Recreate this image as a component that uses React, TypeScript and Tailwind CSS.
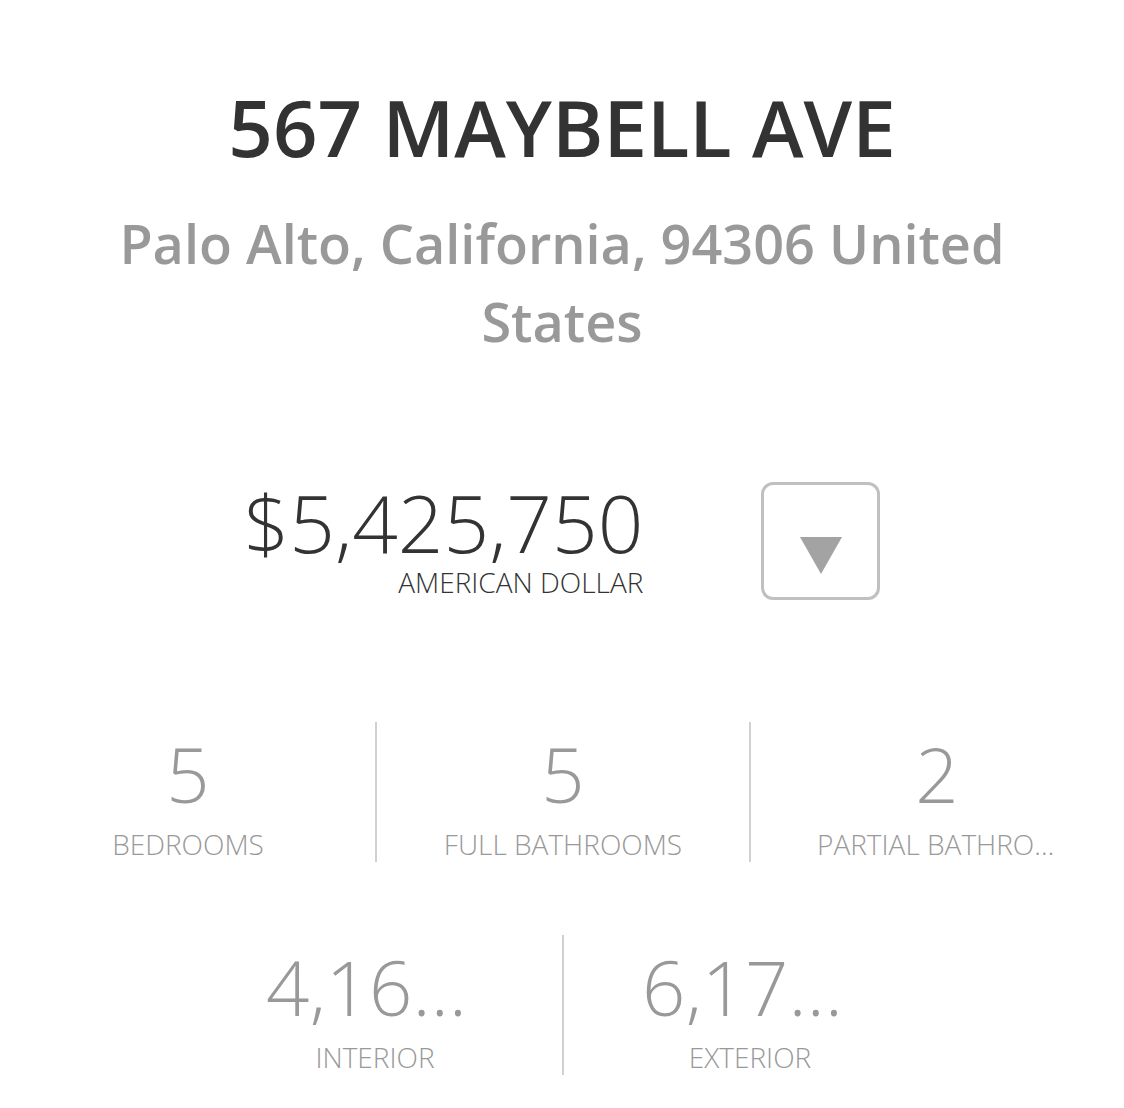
const font = { fontFamily: '"Open Sans", "Liberation Sans", sans-serif' };

type Stat = { value: string; label: string };

const topStats: Stat[] = [
  { value: "5", label: "BEDROOMS" },
  { value: "5", label: "FULL BATHROOMS" },
  { value: "2", label: "PARTIAL BATHROOMS" },
];

const areaStats: Stat[] = [
  { value: "4,164 sq ft", label: "INTERIOR" },
  { value: "6,173 sq ft", label: "EXTERIOR" },
];

function StatCell({ stat, first, wide }: { stat: Stat; first: boolean; wide?: boolean }) {
  return (
    <div
      className={`w-[374px] h-[140px] pt-[14px] text-center text-[#999999] ${
        wide ? "px-[78px]" : "px-[66px]"
      } ${first ? "" : "border-l-2 border-[#d0d0d0]"}`}
    >
      <div className="text-[76px] leading-none font-light truncate">{stat.value}</div>
      <div className="mt-[15px] text-[28px] leading-[35px] font-light truncate">{stat.label}</div>
    </div>
  );
}

export default function App() {
  return (
    <div className="min-h-screen bg-white" style={font}>
      <div className="w-[1124px] mx-auto pt-[88px] pb-[30px] flex flex-col items-center">
        <h1 className="text-[78px] leading-none font-semibold text-[#333333] text-center">
          567 MAYBELL AVE
        </h1>
        <p className="mt-[38px] px-[100px] text-[54px] leading-[78px] font-semibold text-[#999999] text-center">
          Palo Alto, California, 94306 United States
        </p>

        <div className="mt-[122px] flex items-center gap-[118px]">
          <div className="flex flex-col items-end">
            <div className="text-[80px] leading-[76px] font-light text-[#333333]">$5,425,750</div>
            <div className="mt-[7px] text-[28px] leading-[31px] font-light text-[#333333]">
              AMERICAN DOLLAR
            </div>
          </div>
          <button className="w-[119px] h-[118px] border-[3px] border-[#c0c0c0] rounded-[12px] flex justify-center">
            <svg width="42" height="37" viewBox="0 0 42 37" className="mt-[52px]">
              <path d="M0 0 H42 L21 37 Z" fill="#a3a3a3" />
            </svg>
          </button>
        </div>

        <div className="mt-[122px] flex">
          {topStats.map((s, i) => (
            <StatCell key={s.label} stat={s} first={i === 0} />
          ))}
        </div>

        <div className="mt-[73px] flex">
          {areaStats.map((s, i) => (
            <StatCell key={s.label} stat={s} first={i === 0} wide />
          ))}
        </div>
      </div>
    </div>
  );
}
